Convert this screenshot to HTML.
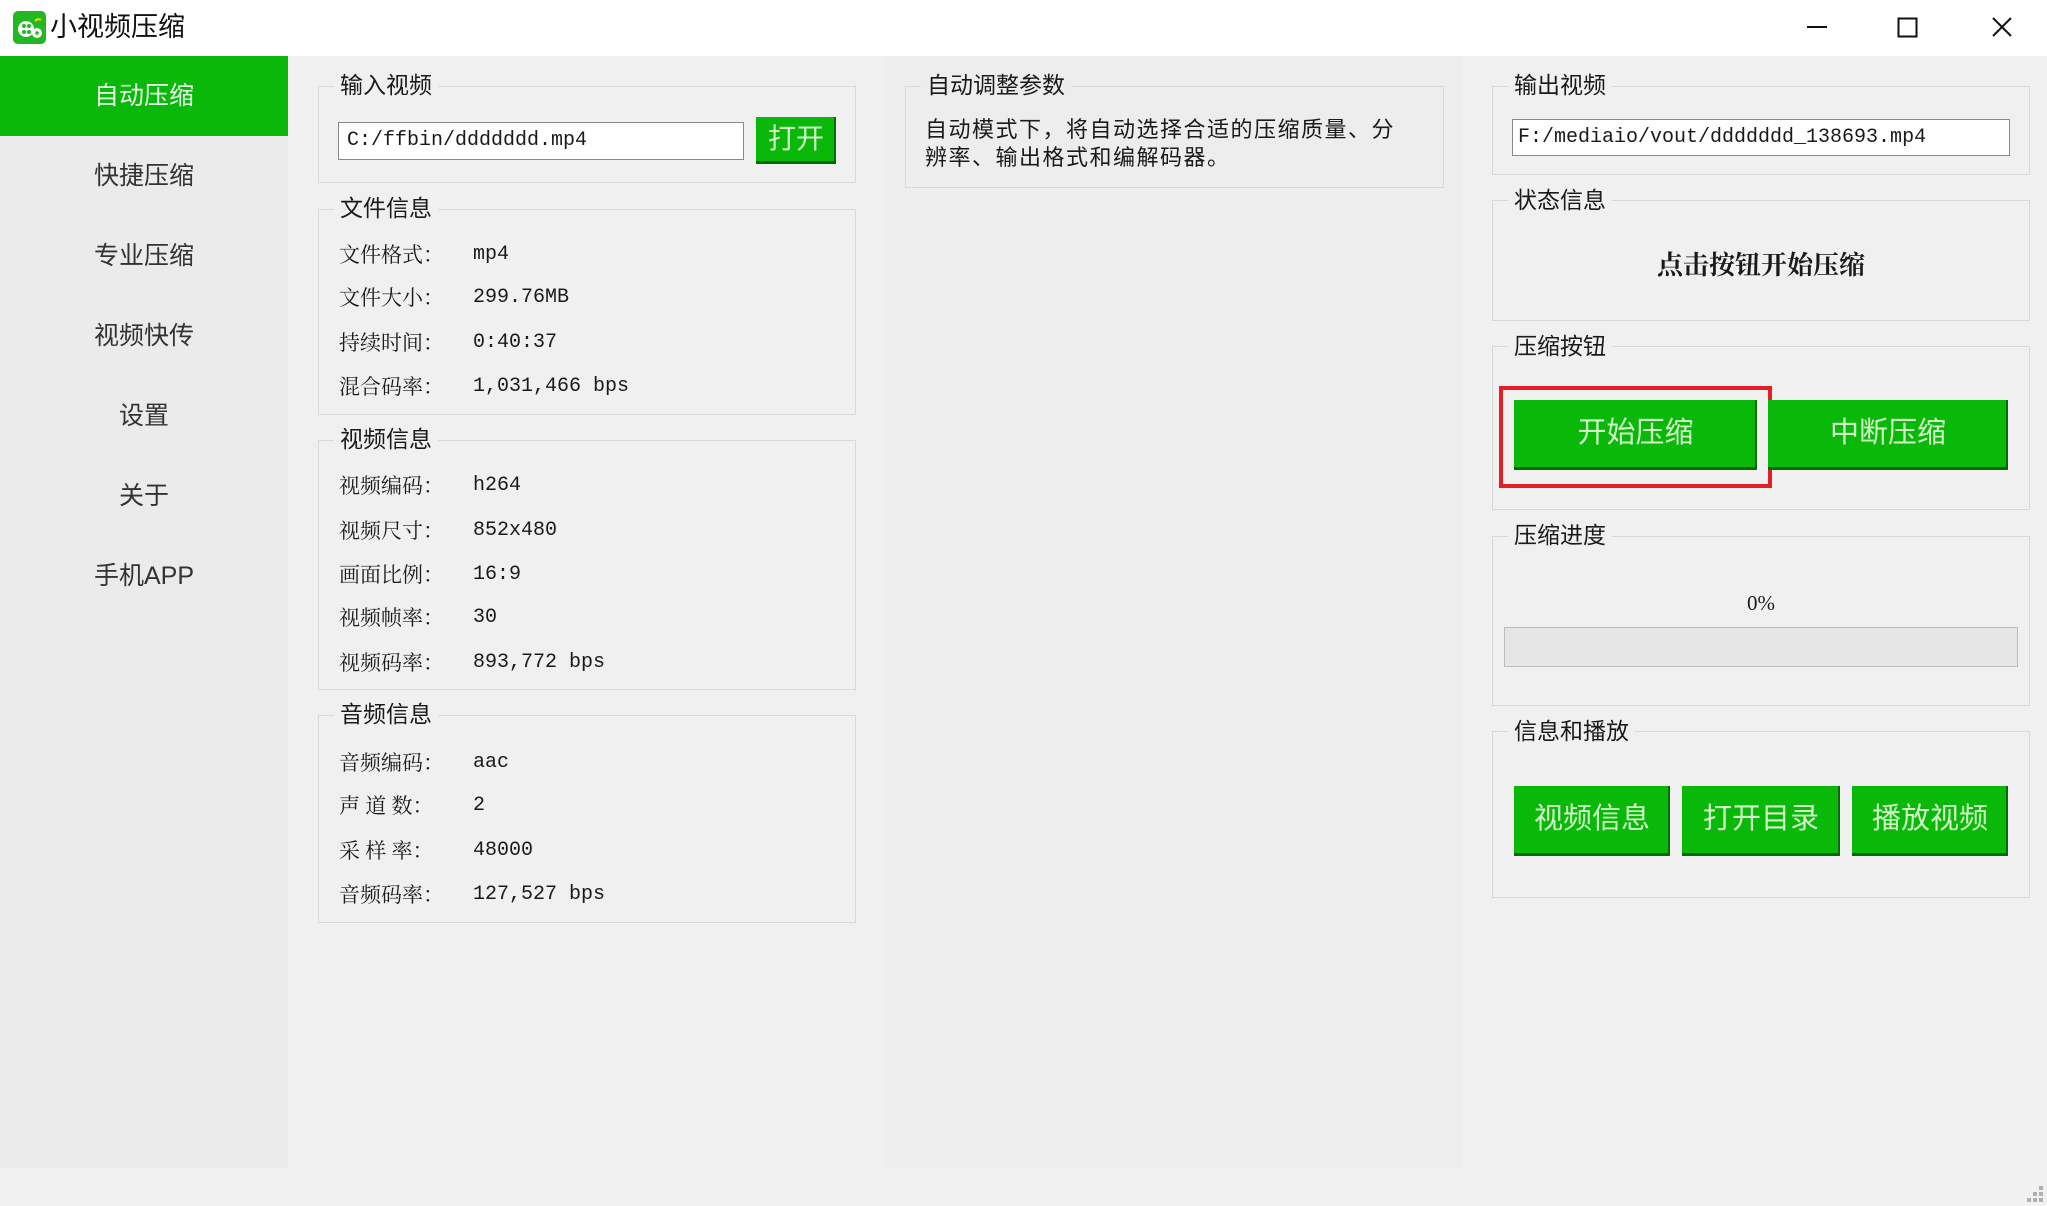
<!DOCTYPE html>
<html><head><meta charset="utf-8">
<style>
*{margin:0;padding:0;box-sizing:border-box}
body{width:2047px;height:1206px;background:#f1f1f1;position:relative;overflow:hidden;font-family:"Liberation Serif","Noto Serif CJK SC",serif;color:#1a1a1a}
.a{position:absolute;white-space:nowrap}
.title{left:0;top:0;width:2047px;height:56px;background:#fff}
.side{left:0;top:56px;width:288px;height:1112px;background:#ebebeb}
.col1{left:288px;top:56px;width:596px;height:1112px;background:#f0f0f0}
.col2{left:884px;top:56px;width:578px;height:1112px;background:#ededed}
.col3{left:1462px;top:56px;width:585px;height:1112px;background:#f0f0f0}
.nav{left:0;width:288px;height:80px;line-height:80px;text-align:center;font-size:25px;color:#333;font-family:"Liberation Sans","Noto Sans CJK SC",sans-serif}
.nav.on{background:#0ab80a;color:#e8fbe8}
.box{border:1px solid #d9d9d9}
.lg{font-size:23px;line-height:26px;padding:0 6px;background:inherit;color:#1a1a1a;font-family:"Liberation Sans","Noto Sans CJK SC",sans-serif}
.row{font-size:21px;line-height:26px}
.row .v{position:absolute;left:134px;font-family:"Liberation Mono","Noto Sans CJK SC",monospace;font-size:20px;white-space:nowrap}
.btn{background:#0ab80a;color:#d2f5c8;text-align:center;font-family:"Liberation Sans","Noto Sans CJK SC",sans-serif;box-shadow:inset -2px -3px 0 #066a06}
.inp{background:#fff;border:1px solid #8a8a8a;font-family:"Liberation Mono",monospace;font-size:20px;padding-left:8px}
</style></head><body>
<div class="a title"></div>
<svg class="a" style="left:13px;top:11px" width="33" height="33" viewBox="0 0 33 33">
<rect width="33" height="33" rx="5" fill="#22b822"/>
<circle cx="13" cy="18" r="8" fill="#fff"/>
<circle cx="11" cy="15" r="2" fill="#22b822"/><circle cx="16" cy="15" r="2" fill="#22b822"/><circle cx="11" cy="21" r="2" fill="#22b822"/><circle cx="16" cy="21" r="2" fill="#22b822"/>
<circle cx="24" cy="22" r="5" fill="#fff"/><circle cx="24" cy="22" r="1.8" fill="#22b822"/>
<path d="M22 10 q3-3 6-1" stroke="#e6d800" stroke-width="2" fill="none"/>
</svg>
<div class="a" style="left:50px;top:11px;font-size:27px;line-height:32px;font-family:'Liberation Sans','Noto Sans CJK SC',sans-serif;color:#111">小视频压缩</div>
<svg class="a" style="left:1800px;top:14px" width="220" height="30" viewBox="0 0 220 30">
<line x1="7" y1="13" x2="27" y2="13" stroke="#111" stroke-width="2"/>
<rect x="98.5" y="4.5" width="18" height="18" fill="none" stroke="#111" stroke-width="2"/>
<path d="M193 4 L211 22 M211 4 L193 22" stroke="#111" stroke-width="2"/>
</svg>
<div class="a side"></div><div class="a col1"></div><div class="a col2"></div><div class="a col3"></div>
<div class="a nav on" style="top:56px">自动压缩</div>
<div class="a nav" style="top:136px">快捷压缩</div>
<div class="a nav" style="top:216px">专业压缩</div>
<div class="a nav" style="top:296px">视频快传</div>
<div class="a nav" style="top:376px">设置</div>
<div class="a nav" style="top:456px">关于</div>
<div class="a nav" style="top:536px">手机APP</div>

<div class="a box" style="left:318px;top:86px;width:538px;height:97px"></div>
<div class="a lg" style="left:334px;top:72px;background:#f0f0f0">输入视频</div>
<div class="a inp" style="left:338px;top:122px;width:406px;height:38px;line-height:36px">C:/ffbin/ddddddd.mp4</div>
<div class="a btn" style="left:756px;top:117px;width:80px;height:47px;line-height:44px;font-size:28px">打开</div>

<div class="a box" style="left:318px;top:209px;width:538px;height:206px"></div>
<div class="a lg" style="left:334px;top:195px;background:#f0f0f0">文件信息</div>
<div class="a row" style="left:339px;top:242px">文件格式：<span class="v">mp4</span></div>
<div class="a row" style="left:339px;top:285px">文件大小：<span class="v">299.76MB</span></div>
<div class="a row" style="left:339px;top:330px">持续时间：<span class="v">0:40:37</span></div>
<div class="a row" style="left:339px;top:374px">混合码率：<span class="v">1,031,466 bps</span></div>

<div class="a box" style="left:318px;top:440px;width:538px;height:250px"></div>
<div class="a lg" style="left:334px;top:426px;background:#f0f0f0">视频信息</div>
<div class="a row" style="left:339px;top:473px">视频编码：<span class="v">h264</span></div>
<div class="a row" style="left:339px;top:518px">视频尺寸：<span class="v">852x480</span></div>
<div class="a row" style="left:339px;top:562px">画面比例：<span class="v">16:9</span></div>
<div class="a row" style="left:339px;top:605px">视频帧率：<span class="v">30</span></div>
<div class="a row" style="left:339px;top:650px">视频码率：<span class="v">893,772 bps</span></div>

<div class="a box" style="left:318px;top:715px;width:538px;height:208px"></div>
<div class="a lg" style="left:334px;top:701px;background:#f0f0f0">音频信息</div>
<div class="a row" style="left:339px;top:750px">音频编码：<span class="v">aac</span></div>
<div class="a row" style="left:339px;top:793px">声 道 数：<span class="v">2</span></div>
<div class="a row" style="left:339px;top:838px">采 样 率：<span class="v">48000</span></div>
<div class="a row" style="left:339px;top:882px">音频码率：<span class="v">127,527 bps</span></div>

<div class="a box" style="left:905px;top:86px;width:539px;height:102px"></div>
<div class="a lg" style="left:921px;top:72px;background:#ededed">自动调整参数</div>
<div class="a" style="left:925px;top:116px;font-size:22px;letter-spacing:1.5px;line-height:28px;font-family:'Liberation Sans','Noto Sans CJK SC',sans-serif;color:#1a1a1a">自动模式下，将自动选择合适的压缩质量、分<br>辨率、输出格式和编解码器。</div>

<div class="a box" style="left:1492px;top:86px;width:538px;height:89px"></div>
<div class="a lg" style="left:1508px;top:72px;background:#f0f0f0">输出视频</div>
<div class="a inp" style="left:1512px;top:119px;width:498px;height:37px;line-height:35px;padding-left:5px">F:/mediaio/vout/ddddddd_138693.mp4</div>

<div class="a box" style="left:1492px;top:200px;width:538px;height:121px"></div>
<div class="a lg" style="left:1508px;top:187px;background:#f0f0f0">状态信息</div>
<div class="a" style="left:1492px;top:250px;width:538px;text-align:center;font-size:26px;font-weight:bold;line-height:32px">点击按钮开始压缩</div>

<div class="a box" style="left:1492px;top:346px;width:538px;height:164px"></div>
<div class="a lg" style="left:1508px;top:333px;background:#f0f0f0">压缩按钮</div>
<div class="a" style="left:1499px;top:386px;width:273px;height:102px;border:4px solid #e31e26"></div>
<div class="a btn" style="left:1514px;top:400px;width:243px;height:70px;line-height:66px;font-size:29px">开始压缩</div>
<div class="a btn" style="left:1768px;top:400px;width:240px;height:70px;line-height:66px;font-size:29px">中断压缩</div>

<div class="a box" style="left:1492px;top:536px;width:538px;height:170px"></div>
<div class="a lg" style="left:1508px;top:522px;background:#f0f0f0">压缩进度</div>
<div class="a" style="left:1492px;top:590px;width:538px;text-align:center;font-size:21px;line-height:26px">0%</div>
<div class="a" style="left:1504px;top:627px;width:514px;height:40px;background:#e6e6e6;border:1px solid #bcbcbc"></div>

<div class="a box" style="left:1492px;top:731px;width:538px;height:167px"></div>
<div class="a lg" style="left:1508px;top:718px;background:#f0f0f0">信息和播放</div>
<div class="a btn" style="left:1514px;top:786px;width:156px;height:70px;line-height:66px;font-size:29px">视频信息</div>
<div class="a btn" style="left:1682px;top:786px;width:158px;height:70px;line-height:66px;font-size:29px">打开目录</div>
<div class="a btn" style="left:1852px;top:786px;width:156px;height:70px;line-height:66px;font-size:29px">播放视频</div>

<svg class="a" style="left:2025px;top:1184px" width="22" height="22">
<g fill="#b0b0b0"><rect x="14" y="2" width="4" height="4"/><rect x="8" y="8" width="4" height="4"/><rect x="14" y="8" width="4" height="4"/><rect x="2" y="14" width="4" height="4"/><rect x="8" y="14" width="4" height="4"/><rect x="14" y="14" width="4" height="4"/></g>
</svg>
</body></html>
